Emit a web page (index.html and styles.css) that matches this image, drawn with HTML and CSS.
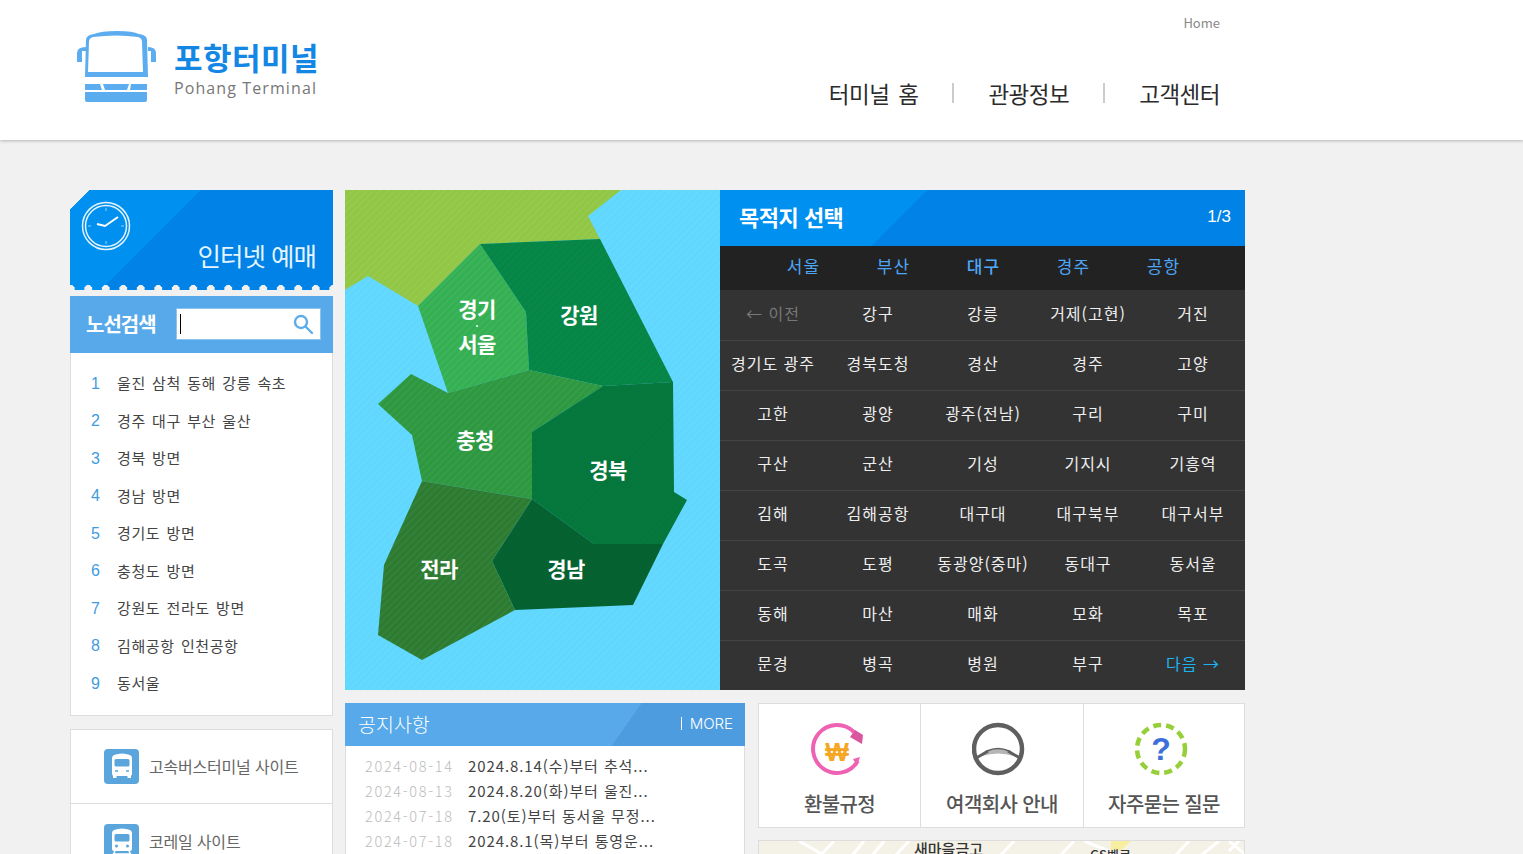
FILE: index.html
```html
<!DOCTYPE html>
<html lang="ko">
<head>
  <meta charset="UTF-8" />
  <title>포항터미널</title>
  <link rel="stylesheet" href="styles.css">
</head>
<body>
  <header class="site-header">
    <div class="header-inner">
      <a class="logo" href="#">
        <svg class="logo-bus" width="80" height="74" viewBox="0 0 80 74">
          <path d="M9 10 Q9 5 17 4 Q24 1 40 1 Q56 1 62 4 Q70 5 70 10 L71 47 H8 Z M16 7 Q12 8 12 12 L11 42 H66 L65 12 Q65 8 61 7 Q40 4 16 7 Z" fill="#5cadf0" fill-rule="evenodd"/>
          <path d="M9 17 Q0 17 0 23 V32 H5 V21 H9 Z M71 17 Q79 17 79 23 V32 H74 V21 H71 Z" fill="#5cadf0"/>
          <path d="M8 54 H23 L25 60 H8 Z M26 54 H52 L50 60 H28 Z M54 54 H70 V60 H53 Z M8 62 H70 V70 Q70 72 68 72 H10 Q8 72 8 70 Z" fill="#5cadf0"/>
        </svg>
        <div class="logo-text">
          <strong>포항터미널</strong>
          <span>Pohang Terminal</span>
        </div>
      </a>
      <div class="header-right">
        <a class="home-link" href="#">Home</a>
        <nav class="main-nav">
          <a href="#">터미널 홈</a>
          <i></i>
          <a href="#">관광정보</a>
          <i></i>
          <a href="#">고객센터</a>
        </nav>
      </div>
    </div>
  </header>

  <div class="wrap">
    <aside class="side">
      <div class="ticket">
        <svg class="clock" width="50" height="50" viewBox="0 0 50 50" fill="none" stroke="#fff">
          <circle cx="25" cy="25" r="23.5" stroke-width="1.5" opacity=".9"/>
          <circle cx="25" cy="25" r="20.5" stroke-width="1.5" opacity=".9"/>
          <path d="M25 7v3M25 40v3M7 25h3M40 25h3" stroke-width="1" opacity=".6"/>
          <path d="M16 23 L24 25 L37 16" stroke-width="2"/>
        </svg>
        <span class="ticket-title">인터넷 예매</span>
      </div>

      <div class="route-search">
        <b>노선검색</b>
        <div class="search-box">
          <span class="caret"></span>
          <svg width="22" height="22" viewBox="0 0 22 22" fill="none" stroke="#5cade8" stroke-width="2.4">
            <circle cx="9" cy="9" r="6"/>
            <path d="M13.5 13.5 L20 20" stroke-linecap="round"/>
          </svg>
        </div>
      </div>

      <ol class="route-list">
        <li><em>1</em>울진 삼척 동해 강릉 속초</li>
        <li><em>2</em>경주 대구 부산 울산</li>
        <li><em>3</em>경북 방면</li>
        <li><em>4</em>경남 방면</li>
        <li><em>5</em>경기도 방면</li>
        <li><em>6</em>충청도 방면</li>
        <li><em>7</em>강원도 전라도 방면</li>
        <li><em>8</em>김해공항 인천공항</li>
        <li><em>9</em>동서울</li>
      </ol>

      <div class="site-links">
        <a href="#">
          <svg width="36" height="36" viewBox="0 0 36 36">
            <rect width="35" height="35" rx="4" fill="#5aa5dc"/>
            <path d="M10 6 Q18 3 26 6 Q28 7 28 9 V25 Q28 26 27 26.5 V29 H23.5 V27 H12.5 V29 H9 V26.5 Q8 26 8 25 V9 Q8 7 10 6 Z" fill="#fff"/>
            <rect x="10.5" y="10" width="15" height="7.5" rx="1.5" fill="#5aa5dc"/>
            <path d="M11 22h3M22 22h3" stroke="#5aa5dc" stroke-width="1.5"/>
          </svg>
          <span>고속버스터미널 사이트</span>
        </a>
        <a href="#">
          <svg width="36" height="36" viewBox="0 0 36 36">
            <rect width="35" height="35" rx="4" fill="#5aa5dc"/>
            <path d="M10 6 Q18 3 26 6 Q28 7 28 9 V25 Q28 27 26 27 H10 Q8 27 8 25 V9 Q8 7 10 6 Z" fill="#fff"/>
            <rect x="10.5" y="10" width="15" height="7.5" rx="1.5" fill="#5aa5dc"/>
            <circle cx="12.5" cy="22" r="1.5" fill="#5aa5dc"/>
            <circle cx="23.5" cy="22" r="1.5" fill="#5aa5dc"/>
            <path d="M11 27 L8 33M25 27 L28 33M10 30h16" stroke="#fff" stroke-width="1.5"/>
          </svg>
          <span>코레일 사이트</span>
        </a>
      </div>
    </aside>

    <main class="content">
      <section class="top-row">
        <div class="region-map">
          <svg width="375" height="500" viewBox="0 0 375 500">
            <defs>
              <pattern id="hatch" width="5" height="5" patternUnits="userSpaceOnUse" patternTransform="rotate(45)">
                <rect width="2" height="5" fill="#fff" opacity=".045"/>
              </pattern>
              <pattern id="hatch-dark" width="5" height="5" patternUnits="userSpaceOnUse" patternTransform="rotate(45)">
                <rect width="2" height="5" fill="#000" opacity=".1"/>
              </pattern>
            </defs>
            <rect width="375" height="500" fill="#60d7ff"/>
            <polygon fill="#91c745" points="0,0 276,0 243,26 255,49 135,54 73,116 23,86 0,100"/>
            <polygon fill="#34b053" points="135,54 73,116 103,203 184,180 181,122"/>
            <polygon fill="#038a47" points="135,54 255,49 328,192 258,196 184,180 181,122"/>
            <polygon fill="#2d9840" points="66,184 33,214 67,245 77,291 187,309 187,242 258,196 184,180 103,203"/>
            <polygon fill="#017a3c" points="258,196 328,192 329,302 342,310 318,354 249,354 187,309 187,242"/>
            <polygon fill="#01632f" points="187,309 249,354 318,354 288,415 170,420 147,371"/>
            <polygon fill="#2c7b31" points="77,291 187,309 147,371 170,420 77,470 33,445 39,375"/>
            <rect width="375" height="500" fill="url(#hatch)"/>
            <polygon fill="url(#hatch-dark)" points="135,54 255,49 328,192 258,196 184,180 181,122"/>
            <polygon fill="url(#hatch-dark)" points="258,196 328,192 329,302 342,310 318,354 249,354 187,309 187,242"/>
            <polygon fill="url(#hatch-dark)" points="187,309 249,354 318,354 288,415 170,420 147,371"/>
            <circle cx="132" cy="136" r="1" fill="#fff"/>
            <g class="map-label">
              <text x="132" y="127">경기</text>
              <text x="132" y="162">서울</text>
              <text x="234" y="133">강원</text>
              <text x="130" y="258">충청</text>
              <text x="263" y="288">경북</text>
              <text x="94" y="387">전라</text>
              <text x="221" y="387">경남</text>
            </g>
          </svg>
        </div>

        <div class="dest">
          <div class="dest-head">
            <b>목적지 선택</b>
            <span>1/3</span>
          </div>
          <div class="dest-tabs">
            <a href="#">서울</a>
            <a href="#">부산</a>
            <a href="#" class="on">대구</a>
            <a href="#">경주</a>
            <a href="#">공항</a>
          </div>
          <div class="dest-grid">
            <a href="#" class="prev">← 이전</a><a href="#">강구</a><a href="#">강릉</a><a href="#">거제(고현)</a><a href="#">거진</a>
            <a href="#">경기도 광주</a><a href="#">경북도청</a><a href="#">경산</a><a href="#">경주</a><a href="#">고양</a>
            <a href="#">고한</a><a href="#">광양</a><a href="#">광주(전남)</a><a href="#">구리</a><a href="#">구미</a>
            <a href="#">구산</a><a href="#">군산</a><a href="#">기성</a><a href="#">기지시</a><a href="#">기흥역</a>
            <a href="#">김해</a><a href="#">김해공항</a><a href="#">대구대</a><a href="#">대구북부</a><a href="#">대구서부</a>
            <a href="#">도곡</a><a href="#">도평</a><a href="#">동광양(중마)</a><a href="#">동대구</a><a href="#">동서울</a>
            <a href="#">동해</a><a href="#">마산</a><a href="#">매화</a><a href="#">모화</a><a href="#">목포</a>
            <a href="#">문경</a><a href="#">병곡</a><a href="#">병원</a><a href="#">부구</a><a href="#" class="next">다음 →</a>
          </div>
        </div>
      </section>

      <section class="bottom-row">
        <div class="notice">
          <div class="notice-head">
            <span>공지사항</span>
            <a href="#">MORE</a>
          </div>
          <ul class="notice-list">
            <li><time>2024-08-14</time><a href="#">2024.8.14(수)부터 추석...</a></li>
            <li><time>2024-08-13</time><a href="#">2024.8.20(화)부터 울진...</a></li>
            <li><time>2024-07-18</time><a href="#">7.20(토)부터 동서울 무정...</a></li>
            <li><time>2024-07-18</time><a href="#">2024.8.1(목)부터 통영운...</a></li>
          </ul>
        </div>

        <div class="extras">
          <div class="quick">
            <a href="#">
              <svg width="60" height="56" viewBox="0 0 60 56" fill="none">
                <path d="M47.8 40 A24 24 0 1 1 44 11" stroke="#ee62b4" stroke-width="4"/>
                <path d="M45 9 L53 14 L52 23 L40 16 Z" fill="#d9559f"/>
                <path d="M43 38 L50 36 L47 45 Z" fill="#ee62b4"/>
                <text x="27" y="40" class="won">₩</text>
              </svg>
              <span>환불규정</span>
            </a>
            <a href="#">
              <svg width="60" height="56" viewBox="0 0 60 56" fill="none">
                <circle cx="26" cy="28" r="24" stroke="#5f5f5f" stroke-width="4.5"/>
                <path d="M13 30 Q26 25 39 30 L42 35 Q26 30 10 35 Z" fill="#b5b5b5"/>
                <path d="M4 37 Q13 32 16 30M48 37 Q39 32 36 30" stroke="#5f5f5f" stroke-width="3"/>
                <path d="M15 30 Q26 25 37 30" stroke="#5f5f5f" stroke-width="1.5"/>
              </svg>
              <span>여객회사 안내</span>
            </a>
            <a href="#">
              <svg width="60" height="56" viewBox="0 0 60 56" fill="none">
                <circle cx="27" cy="28" r="24" stroke="#97cf3a" stroke-width="4.5" stroke-dasharray="8 5.07"/>
                <text x="27" y="39" class="qmark">?</text>
              </svg>
              <span>자주묻는 질문</span>
            </a>
          </div>
          <div class="mini-map">
            <svg width="487" height="20" viewBox="0 0 487 20" fill="none" stroke="#fff" stroke-width="3">
              <path d="M40 0 L68 16M75 0 L60 16M105 0 L92 16M125 0 L112 16M150 0 L135 16M255 0 L240 16M315 0 L300 16M325 0 L365 16M460 0 L440 16M430 0 L415 16M480 0 L470 10M470 0 L487 14"/>
              <polygon points="352,0 372,0 362,9 352,9" fill="#f8eea0" stroke="none"/>
              <text x="155" y="14" class="map-text">새마을금고</text>
              <text x="331" y="19" class="map-text small">GS벨로</text>
            </svg>
          </div>
        </div>
      </section>
    </main>
  </div>
</body>
</html>
```

FILE: styles.css
```css
* { box-sizing: border-box; }
html, body {
  height: 854px;
  overflow: hidden;
}
body {
  margin: 0;
  background-color: #f1f1f1;
  font-family: "Noto Sans CJK KR", "Noto Sans", sans-serif;
  color: #333;
}
a {
  color: inherit;
  text-decoration: none;
}
.site-header {
  height: 140px;
  background-color: #fff;
  box-shadow: 0 1px 3px rgba(0, 0, 0, 0.25);
}
.header-inner {
  width: 1150px;
  margin-left: 70px;
  height: 140px;
  display: flex;
  justify-content: space-between;
}
.logo {
  display: flex;
  padding: 30px 0 0 7px;
}
.logo-bus {
  margin-right: 17px;
}
.logo-text {
  display: flex;
  flex-direction: column;
  padding-top: 6px;
}
.logo-text strong {
  color: #1487e5;
  font-size: 31px;
  line-height: 42px;
  letter-spacing: 0.5px;
}
.logo-text span {
  color: #777;
  font-family: "Open Sans", sans-serif;
  font-size: 16px;
  line-height: 20px;
  letter-spacing: 1.1px;
}
.header-right {
  display: flex;
  flex-direction: column;
  align-items: flex-end;
}
.home-link {
  margin-top: 14px;
  color: #888;
  font-size: 13px;
  line-height: 18px;
}
.main-nav {
  display: flex;
  align-items: center;
  margin-top: 43px;
  color: #2b2b2b;
  font-size: 22.5px;
  line-height: 36px;
}
.main-nav a {
  letter-spacing: -0.5px;
  word-spacing: 3px;
}
.main-nav i {
  width: 2px;
  height: 20px;
  margin: 0 34px;
  background-color: #ccc;
}

.wrap {
  display: flex;
  gap: 12px;
  width: 1175px;
  margin: 50px 0 0 70px;
}
.side {
  width: 263px;
  flex: none;
}
.ticket {
  position: relative;
  height: 100px;
  background: linear-gradient(135deg, transparent 14px, #0090ef 14px, #0090ef 92px, #0082e6 92px);
  overflow: hidden;
}
.ticket::after {
  content: "";
  position: absolute;
  left: 0;
  right: 0;
  bottom: 0;
  height: 5px;
  background: radial-gradient(circle at 50% 4px, #f1f1f1 3.8px, transparent 4.2px) -8px 0 / 17.5px 6px repeat-x;
}
.clock {
  position: absolute;
  left: 11px;
  top: 11px;
}
.ticket-title {
  position: absolute;
  right: 17px;
  top: 45px;
  color: #e6f4ff;
  font-size: 25.5px;
  line-height: 40px;
  letter-spacing: -1px;
}
.route-search {
  display: flex;
  align-items: center;
  height: 57px;
  margin-top: 6px;
  padding: 0 0 2px 16px;
  background-color: #57a9ea;
  color: #fff;
}
.route-search b {
  width: 90px;
  font-size: 20px;
  letter-spacing: -1px;
}
.search-box {
  display: flex;
  align-items: center;
  justify-content: space-between;
  width: 145px;
  height: 32px;
  padding: 0 6px 0 3px;
  background-color: #fff;
  border: 1px solid #8cc4ef;
}
.caret {
  width: 1px;
  height: 20px;
  background-color: #000;
}
.route-list {
  height: 363px;
  margin: 0;
  padding: 11px 0 0;
  list-style: none;
  background-color: #fff;
  border: 1px solid #ddd;
  border-top: 0;
}
.route-list li {
  display: flex;
  align-items: center;
  height: 37.5px;
  padding-left: 20px;
  color: #444;
  font-size: 15px;
  letter-spacing: 0.6px;
  word-spacing: 1.5px;
}
.route-list em {
  width: 26px;
  padding-top: 2px;
  color: #3f9be0;
  font-style: normal;
  font-size: 16px;
  font-family: "Liberation Sans", sans-serif;
}
.site-links {
  margin-top: 13px;
  background-color: #fff;
  border: 1px solid #ddd;
}
.site-links a {
  display: flex;
  align-items: center;
  gap: 9px;
  height: 74px;
  padding-left: 33px;
  color: #666;
  font-size: 16px;
  letter-spacing: -0.2px;
}
.site-links span {
  margin-bottom: 2px;
}
.site-links a + a {
  height: 76px;
  margin-top: -1px;
  padding-top: 1px;
  border-top: 1px solid #ddd;
}

.content {
  width: 900px;
  flex: none;
}
.top-row {
  display: flex;
  height: 500px;
}
.region-map {
  width: 375px;
  height: 500px;
}
.region-map svg {
  display: block;
}
.map-label text {
  fill: #fff;
  font-size: 21px;
  font-weight: 700;
  text-anchor: middle;
  letter-spacing: -0.5px;
}
.dest {
  width: 525px;
  background-color: #333;
}
.dest-head {
  display: flex;
  align-items: center;
  justify-content: space-between;
  height: 56px;
  padding: 0 14px 4px 19px;
  background: linear-gradient(135deg, #0090ef 0, #0090ef 147px, #0082e6 147px);
  color: #fff;
}
.dest-head b {
  font-size: 22px;
  letter-spacing: -0.5px;
}
.dest-head span {
  margin-top: 2px;
  font-family: "Liberation Sans", sans-serif;
  font-size: 17px;
}
.dest-tabs {
  display: flex;
  height: 44px;
  padding-left: 38px;
  background-color: #222;
}
.dest-tabs a {
  width: 90px;
  padding-left: 1px;
  color: #4ea5f5;
  font-size: 17px;
  letter-spacing: 1px;
  line-height: 40px;
  text-align: center;
}
.dest-tabs .on {
  color: #4fa8f8;
  font-weight: 500;
}
.dest-grid {
  display: grid;
  grid-template-columns: repeat(5, 105px);
  grid-auto-rows: 50px;
}
.dest-grid a {
  padding-left: 1px;
  color: #eee;
  font-size: 16px;
  letter-spacing: 1px;
  line-height: 45px;
  text-align: center;
  border-top: 1px solid #444;
}
.dest-grid a:nth-child(-n+5) {
  border-top-color: #333;
}
.dest-grid .prev {
  color: #777;
}
.dest-grid .next {
  color: #1cb4f0;
}

.bottom-row {
  display: flex;
  gap: 13px;
  margin-top: 13px;
}
.notice {
  width: 400px;
  height: 200px;
  background-color: #fff;
  border: 1px solid #ddd;
  border-top: 0;
}
.notice-head {
  display: flex;
  align-items: center;
  justify-content: space-between;
  height: 43px;
  margin: 0 -1px;
  padding: 0 12px 2px 13px;
  background: linear-gradient(125deg, #57a9ea 0, #57a9ea 243px, #4d9ce0 243px);
  color: #fff;
}
.notice-head span {
  font-size: 19.5px;
  font-weight: 300;
}
.notice-head a {
  padding-left: 8px;
  border-left: 1px solid #fff;
  font-family: "Inter", sans-serif;
  font-size: 15px;
  font-weight: 300;
  line-height: 13px;
}
.notice-list {
  margin: 0;
  padding: 7px 0 0 19px;
  list-style: none;
}
.notice-list li {
  display: flex;
  height: 25px;
  align-items: center;
  font-size: 15px;
}
.notice-list time {
  width: 103px;
  color: #bbb;
  font-size: 14.5px;
  font-weight: 300;
  letter-spacing: 1.7px;
}
.notice-list a {
  color: #444;
  letter-spacing: 0.9px;
}
.extras {
  width: 487px;
}
.quick {
  display: flex;
  height: 125px;
  background-color: #fff;
  border: 1px solid #ddd;
}
.quick a {
  flex: none;
  width: 161px;
  display: flex;
  flex-direction: column;
  align-items: center;
  padding-top: 17px;
}
.quick a + a {
  width: 163px;
  border-left: 1px solid #ddd;
}
.quick a:last-child {
  width: 161px;
}
.quick span {
  margin-top: 12px;
  color: #555;
  font-size: 20px;
  font-weight: 500;
  letter-spacing: -0.6px;
  line-height: 30px;
}
.won {
  fill: #f5a623;
  font-family: "Liberation Sans", sans-serif;
  font-size: 25px;
  font-weight: 700;
  text-anchor: middle;
}
.qmark {
  fill: #3d6fd8;
  font-family: "Liberation Sans", sans-serif;
  font-size: 32px;
  font-weight: 700;
  text-anchor: middle;
}
.mini-map {
  height: 20px;
  margin-top: 12px;
  background-color: #f4f1e6;
  border: 1px solid #ddd;
  overflow: hidden;
}
.mini-map svg {
  display: block;
}
.map-text {
  fill: #333;
  stroke: none;
  font-size: 15px;
  font-weight: 500;
}
.map-text.small {
  font-size: 13px;
}
```
